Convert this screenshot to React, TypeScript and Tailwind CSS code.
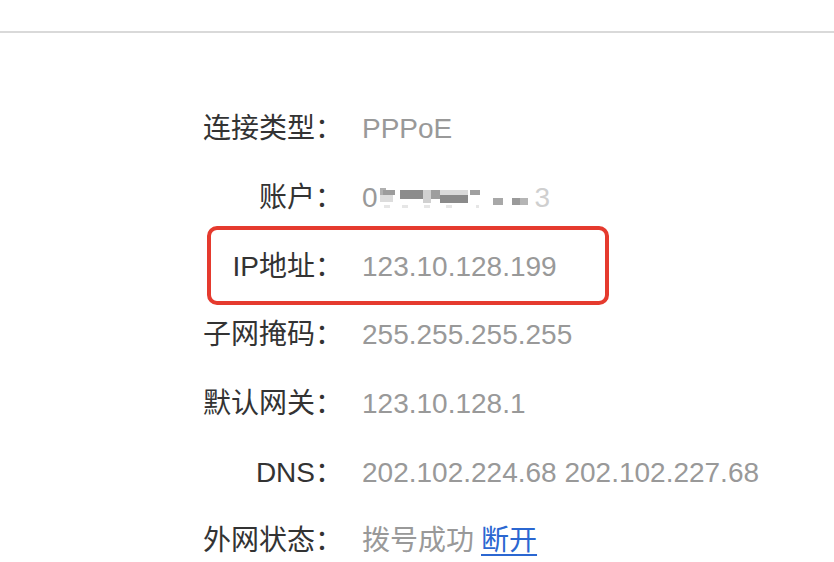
import React from "react";

const font = { fontFamily: '"Liberation Sans", "Noto Sans CJK SC", sans-serif' };

function Mosaic() {
  const cells: [number, number, number, number, string][] = [
    [0, 5, 6, 7, "#b0b0b0"],
    [3, 7, 12, 5, "#9c9c9c"],
    [0, 12, 13, 7, "#dcdcdc"],
    [20, 7, 23, 9, "#8c8c8c"],
    [43, 7, 8, 13, "#d0d0d0"],
    [51, 7, 9, 9, "#9e9e9e"],
    [60, 7, 28, 5, "#dadada"],
    [60, 12, 28, 8, "#8a8a8a"],
    [90, 7, 10, 5, "#a0a0a0"],
    [4, 22, 6, 3, "#e6e6e6"],
    [22, 22, 6, 3, "#e6e6e6"],
    [44, 22, 6, 3, "#e6e6e6"],
    [66, 22, 6, 3, "#e6e6e6"],
    [96, 22, 3, 3, "#e6e6e6"],
    [113, 15, 10, 7, "#a8a8a8"],
    [132, 15, 8, 7, "#9a9a9a"],
    [140, 15, 8, 7, "#b5b5b5"],
  ];
  return (
    <svg width="155" height="30" viewBox="0 0 155 30" className="block">
      {cells.map(([x, y, w, h, c], i) => (
        <rect key={i} x={x} y={y} width={w} height={h} fill={c} />
      ))}
    </svg>
  );
}

function Row({ label, children, boxed }: { label: string; children: React.ReactNode; boxed?: boolean }) {
  return (
    <div className="relative flex items-center h-[68.67px]">
      <div className="w-[343px] text-right text-[#333333] whitespace-nowrap">{label}</div>
      <div className="ml-[19px] text-[#999999] whitespace-nowrap flex items-center">{children}</div>
      {boxed && (
        <div className="absolute left-[207px] top-[-6px] w-[402px] h-[79px] border-[4px] border-[#e53a2e] rounded-[10px]" />
      )}
    </div>
  );
}

export default function App() {
  return (
    <div className="w-[834px] h-[562px] bg-white overflow-hidden text-[28px]" style={font}>
      <div className="h-[31px]" />
      <div className="h-[2px] bg-[#d9d9d9]" />
      <div className="pt-[62px]">
        <Row label="连接类型：">PPPoE</Row>
        <Row label="账户：">
          <span>0</span>
          <span className="ml-[2px]"><Mosaic /></span>
          <span className="text-[#cfcfcf]">3</span>
        </Row>
        <Row label="IP地址：" boxed>123.10.128.199</Row>
        <Row label="子网掩码：">255.255.255.255</Row>
        <Row label="默认网关：">123.10.128.1</Row>
        <Row label="DNS：">202.102.224.68 202.102.227.68</Row>
        <Row label="外网状态：">
          <span>拨号成功</span>
          <span className="ml-[7px] text-[#2b67d1] underline underline-offset-[4px] decoration-[2px]">断开</span>
        </Row>
      </div>
    </div>
  );
}
